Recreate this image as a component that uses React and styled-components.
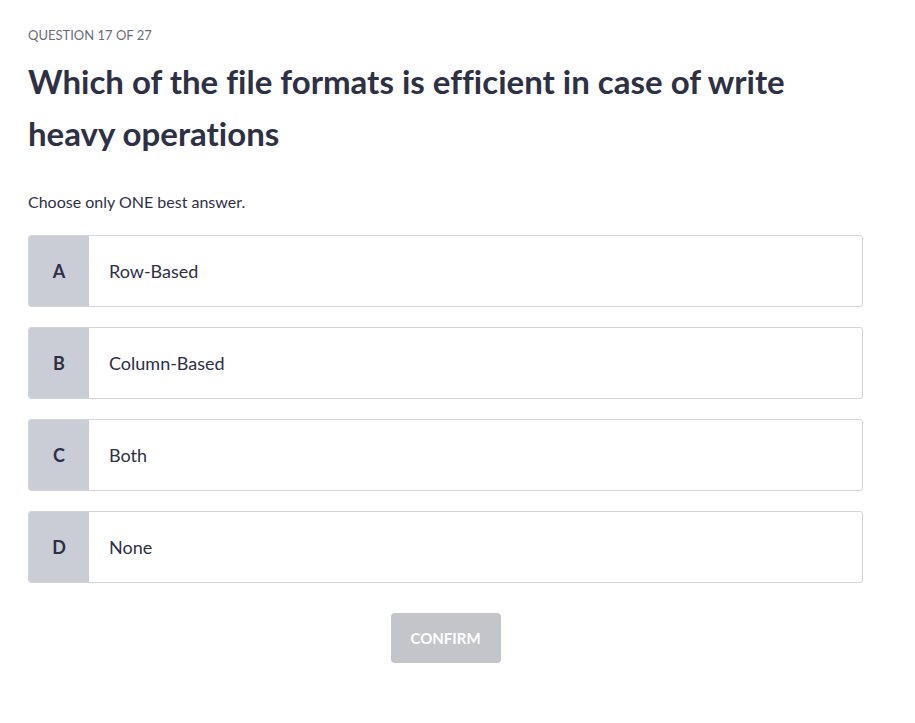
import React from "react";
import styled, { createGlobalStyle } from "styled-components";

const GlobalStyle = createGlobalStyle`
  body {
    margin: 0;
    background: #ffffff;
    font-family: Lato, "Noto Sans", sans-serif;
    font-variant-ligatures: none;
    color: #2e3045;
  }
`;

const Page = styled.div`
  padding: 27px 52px 0 28px;
`;
const Counter = styled.div`
  font-size: 13px;
  color: #6b6d78;
  line-height: 16px;
  text-transform: uppercase;
`;
const Question = styled.h1`
  margin: 12px 0 0;
  font-size: 33px;
  line-height: 52px;
  font-weight: 700;
  color: #2e3045;
`;
const Hint = styled.p`
  margin: 33px 0 0;
  font-size: 16px;
  line-height: 20px;
  color: #2e3045;
`;
const Options = styled.div`
  margin-top: 23px;
  display: flex;
  flex-direction: column;
  gap: 20px;
`;
const Option = styled.div`
  box-sizing: border-box;
  display: flex;
  height: 72px;
  border: 1px solid #d3d3db;
  border-radius: 3px;
  overflow: hidden;
  background: #ffffff;
  cursor: pointer;
`;
const Letter = styled.div`
  width: 60px;
  flex-shrink: 0;
  display: flex;
  align-items: center;
  justify-content: center;
  background: #cbcdd6;
  font-size: 18px;
  font-weight: 700;
  color: #2e3045;
`;
const Label = styled.div`
  display: flex;
  align-items: center;
  padding-left: 20px;
  font-size: 18px;
  color: #2e3045;
`;
const Footer = styled.div`
  display: flex;
  justify-content: center;
  margin-top: 30px;
`;
const Confirm = styled.button`
  width: 110px;
  height: 50px;
  border: none;
  border-radius: 4px;
  background: #c4c5cb;
  color: #ffffff;
  font-family: inherit;
  font-size: 15px;
  font-weight: 700;
  text-transform: uppercase;
`;

const answers = [
  { key: "A", text: "Row-Based" },
  { key: "B", text: "Column-Based" },
  { key: "C", text: "Both" },
  { key: "D", text: "None" },
];

const App = () => {
  return (
    <Page>
      <GlobalStyle />
      <Counter>Question 17 of 27</Counter>
      <Question>
        Which of the file formats is efficient in case of write heavy operations
      </Question>
      <Hint>Choose only ONE best answer.</Hint>
      <Options>
        {answers.map((a) => (
          <Option key={a.key}>
            <Letter>{a.key}</Letter>
            <Label>{a.text}</Label>
          </Option>
        ))}
      </Options>
      <Footer>
        <Confirm disabled>Confirm</Confirm>
      </Footer>
    </Page>
  );
};

export default App;
